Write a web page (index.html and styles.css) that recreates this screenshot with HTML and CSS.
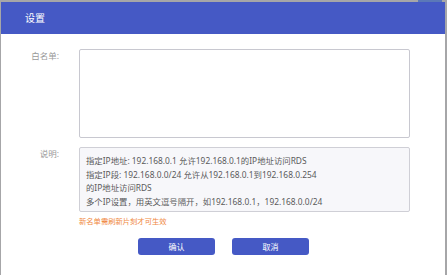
FILE: index.html
```html
<!DOCTYPE html>
<html lang="zh-CN">
<head>
    <meta charset="UTF-8">
    <title>设置</title>
    <link rel="stylesheet" href="styles.css">
</head>
<body>
    <div class="backdrop-bar"><span class="bar-btn"></span></div>
    <div class="modal">
        <div class="modal-header">设置</div>
        <div class="modal-body">
            <div class="form-row">
                <label class="form-label" for="whitelist">白名单:</label>
                <textarea id="whitelist" class="whitelist"></textarea>
            </div>
            <div class="form-row desc-row">
                <span class="form-label">说明:</span>
                <div class="desc-box">
                    <p>指定IP地址: 192.168.0.1 允许192.168.0.1的IP地址访问RDS</p>
                    <p>指定IP段: 192.168.0.0/24 允许从192.168.0.1到192.168.0.254</p>
                    <p>的IP地址访问RDS</p>
                    <p>多个IP设置，用英文逗号隔开，如192.168.0.1，192.168.0.0/24</p>
                </div>
            </div>
            <div class="note">新名单需刷新片刻才可生效</div>
            <div class="actions">
                <button class="btn">确认</button>
                <button class="btn">取消</button>
            </div>
        </div>
    </div>
</body>
</html>
```

FILE: styles.css
```css
* {
    box-sizing: border-box;
    margin: 0;
    padding: 0;
    font-family: 'Noto Sans', 'Noto Sans CJK SC', sans-serif;
}

body {
    background-color: #a6a6a8;
    width: 447px;
    height: 275px;
    overflow: hidden;
}

.backdrop-bar {
    position: relative;
    height: 2px;
}

.bar-btn {
    position: absolute;
    left: 418px;
    top: 0;
    width: 24px;
    height: 2px;
    background: #5b78b8;
}

.modal {
    margin-left: 1px;
    width: 444px;
    height: 273px;
    background: white;
}

.modal-header {
    height: 32px;
    background-color: #4559c5;
    color: white;
    font-size: 10px;
    line-height: 32px;
    padding-left: 24px;
}

.modal-body {
    padding-top: 15px;
}

.form-row {
    display: flex;
}

.form-label {
    width: 78px;
    text-align: right;
    padding-right: 20px;
    font-size: 8.5px;
    color: #999;
    line-height: 13px;
}

.whitelist {
    width: 331px;
    height: 89px;
    border: 1px solid #c8c8d0;
    border-radius: 2px;
    resize: none;
    outline: none;
}

.desc-row {
    margin-top: 9px;
}

.desc-box {
    width: 331px;
    height: 65px;
    border: 1px solid #cfcfd6;
    border-radius: 2px;
    background: #f7f7fa;
    padding: 6px 6px;
    color: #5a5a5a;
    font-size: 8.4px;
    line-height: 13.7px;
}

.note {
    margin: 2px 0 0 78px;
    color: #f0883e;
    font-size: 7.3px;
    line-height: 14px;
    height: 14px;
}

.actions {
    display: flex;
    gap: 17px;
    margin: 10px 0 0 137px;
}

.btn {
    width: 77px;
    height: 17px;
    border: none;
    border-radius: 3px;
    background-color: #4559c5;
    color: white;
    font-size: 8px;
}
```
